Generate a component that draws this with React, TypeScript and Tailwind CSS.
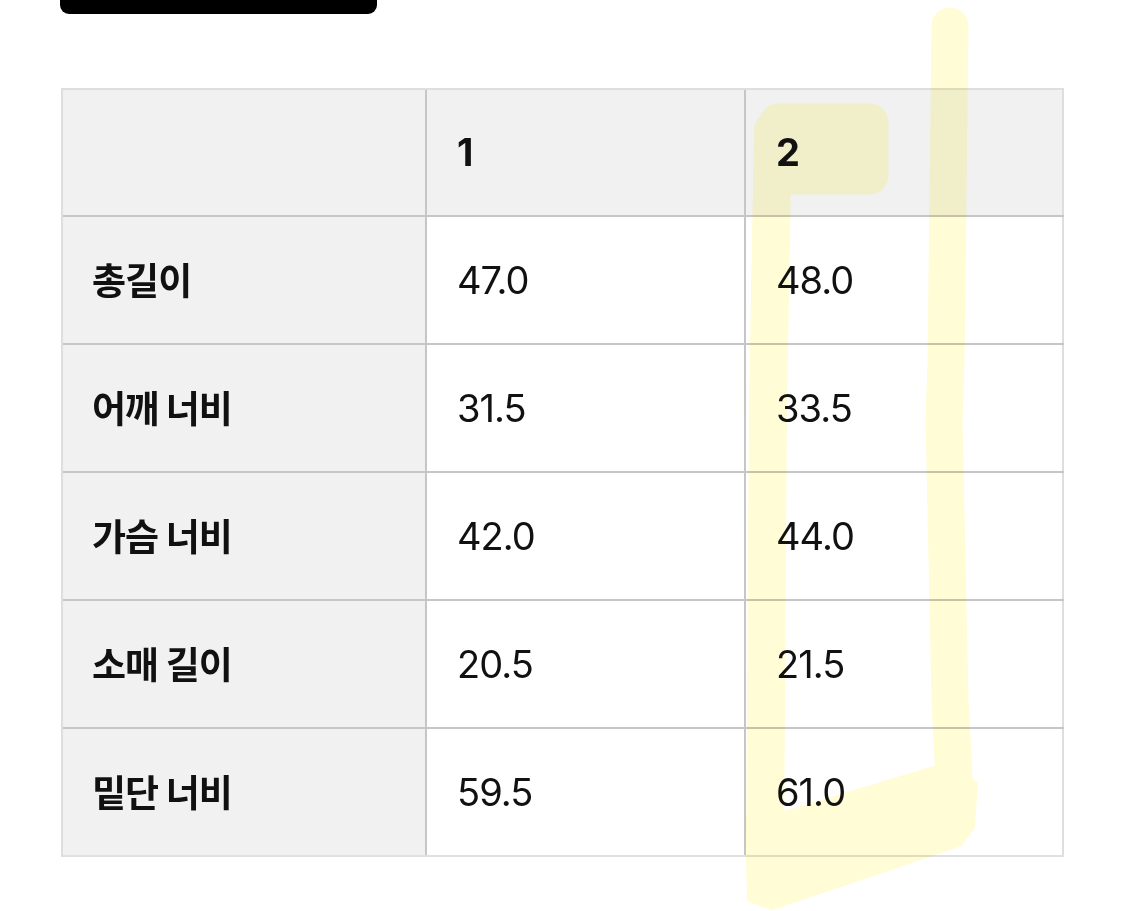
import React from "react";

const rows: [string, string, string][] = [
  ["총길이", "47.0", "48.0"],
  ["어깨 너비", "31.5", "33.5"],
  ["가슴 너비", "42.0", "44.0"],
  ["소매 길이", "20.5", "21.5"],
  ["밑단 너비", "59.5", "61.0"],
];

const num = "font-['Inter','Noto_Sans_CJK_KR',sans-serif] text-[38px] tracking-[-0.025em] text-[#111]";

export default function App() {
  return (
    <div className="relative w-[1125px] h-[911px] bg-white overflow-hidden">
      <div className="ml-[60px] w-[317px] h-[14px] bg-black rounded-b-[9px]" />
      <div className="ml-[61px] mt-[74px] w-[1003px] border-t-2 border-l-2 border-[#dedede]">
        <div className="grid grid-cols-[364px_319px_318px] h-[127px] border-b-2 border-[#c6c6c6] bg-[#f1f1f1]">
          <div className="border-r-2 border-[#c6c6c6]" />
          <div className="border-r-2 border-[#c6c6c6] flex items-center pl-[30px]">
            <span className={num + " font-bold"}>1</span>
          </div>
          <div className="border-r-2 border-[#dedede] flex items-center pl-[30px]">
            <span className={num + " font-bold"}>2</span>
          </div>
        </div>
        {rows.map((r, i) => (
          <div
            key={i}
            className={
              "grid grid-cols-[364px_319px_318px] h-[128px] border-b-2 " +
              (i === rows.length - 1 ? "border-[#e0e0e0]" : "border-[#c6c6c6]")
            }
          >
            <div className="bg-[#f1f1f1] border-r-2 border-[#c6c6c6] flex items-center pl-[29px]">
              <span className="font-['Noto_Sans_CJK_KR',sans-serif] font-bold text-[37px] tracking-[-0.025em] text-[#111]">
                {r[0]}
              </span>
            </div>
            <div className="bg-white border-r-2 border-[#c6c6c6] flex items-center pl-[30px]">
              <span className={num}>{r[1]}</span>
            </div>
            <div className="bg-white border-r-2 border-[#dedede] flex items-center pl-[30px]">
              <span className={num}>{r[2]}</span>
            </div>
          </div>
        ))}
      </div>
      <svg
        className="absolute left-0 top-0 pointer-events-none mix-blend-multiply"
        width="1125"
        height="911"
        viewBox="0 0 1125 911"
      >
        <g fill="#fffcd6" stroke="#fffcd6" strokeLinecap="round" strokeLinejoin="round">
          <path d="M 950 26 L 946 360 L 944 420 L 950 700 L 955 800" fill="none" strokeWidth="37" />
          <path d="M 773 130 L 768 400 L 765 860" fill="none" strokeWidth="38" />
          <rect x="760" y="104" width="128" height="90" rx="18" strokeWidth="1" />
          <path
            d="M 750 818 L 782 817 L 937 770 L 973 785 L 970 826 L 958 842 L 772 905 L 752 898 Z"
            strokeWidth="10"
          />
        </g>
      </svg>
    </div>
  );
}
